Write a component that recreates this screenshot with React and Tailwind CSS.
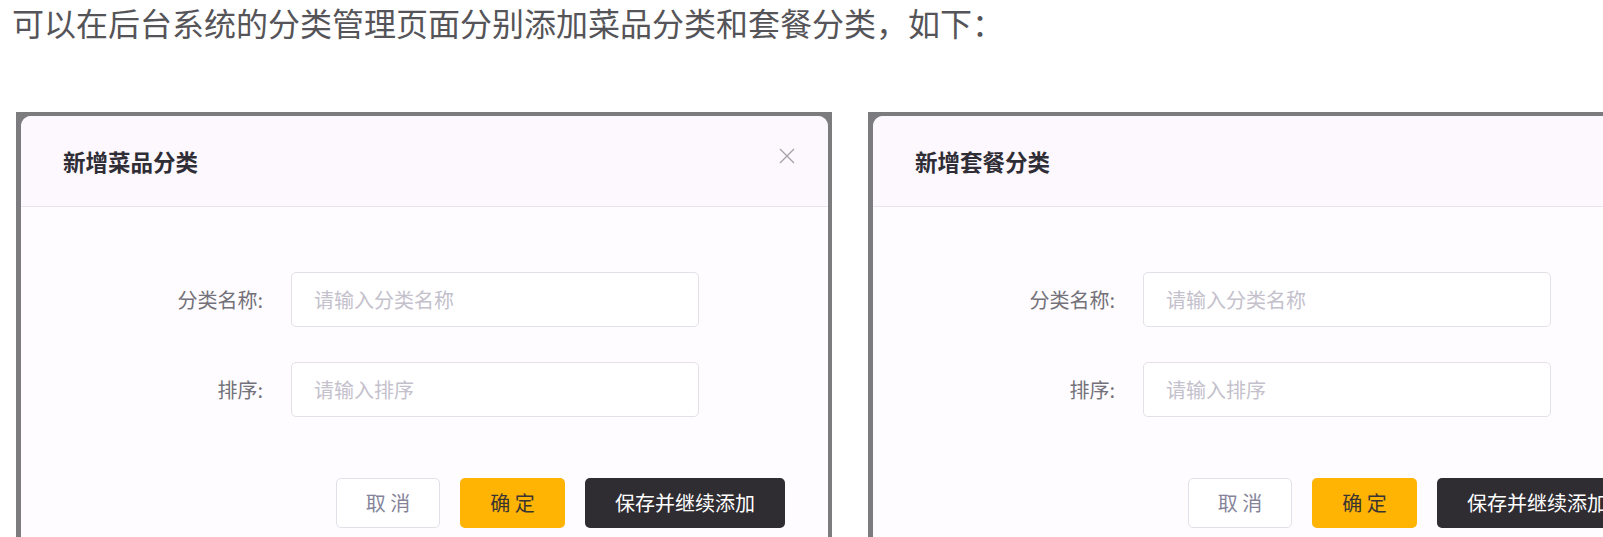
import React from 'react';

const font = { fontFamily: '"Noto Sans CJK SC", "Noto Sans", sans-serif' };

const CategoryDialog = ({ title }) => {
  return (
    <div className="shrink-0 w-[816px] bg-[#7c7b7d] pt-[4px] pl-[5px] pr-[4px]">
      <div className="w-[807px] h-[460px] rounded-t-[10px] bg-[#fefcfe] overflow-hidden">
        <div className="h-[91px] bg-[#fdf8fd] border-b border-[#e9e5eb] flex items-center justify-between pl-[42px] pr-[33px]">
          <span className="text-[22.5px] font-bold text-[#2f2d36] leading-none">{title}</span>
          <svg width="16" height="16" viewBox="0 0 16 16" className="-mt-[10px]">
            <path d="M1 1 L15 15 M15 1 L1 15" stroke="#a3a1a8" strokeWidth="1.3" fill="none" />
          </svg>
        </div>

        <div className="pt-[65px]">
          <div className="flex items-center">
            <label className="w-[270px] pr-[28px] text-right text-[20px] text-[#737179]">分类名称:</label>
            <input
              type="text"
              placeholder="请输入分类名称"
              className="w-[408px] h-[55px] rounded-[5px] border border-[#e3e1e7] bg-white px-[22px] text-[20px] placeholder:text-[#c4c1cc] outline-none"
              style={font}
            />
          </div>
          <div className="flex items-center mt-[35px]">
            <label className="w-[270px] pr-[28px] text-right text-[20px] text-[#737179]">排序:</label>
            <input
              type="text"
              placeholder="请输入排序"
              className="w-[408px] h-[55px] rounded-[5px] border border-[#e3e1e7] bg-white px-[22px] text-[20px] placeholder:text-[#c4c1cc] outline-none"
              style={font}
            />
          </div>

          <div className="flex justify-end gap-[20px] pr-[43px] mt-[61px]">
            <button className="w-[104px] h-[50px] rounded-[5px] border border-[#e3e1e8] bg-white text-[20px] text-[#85849a]" style={font}>
              取 消
            </button>
            <button className="w-[105px] h-[50px] rounded-[5px] bg-[#ffb302] text-[20px] text-[#3a3532]" style={font}>
              确 定
            </button>
            <button className="w-[200px] h-[50px] rounded-[5px] bg-[#2f2c32] text-[20px] text-white" style={font}>
              保存并继续添加
            </button>
          </div>
        </div>
      </div>
    </div>
  );
};

const App = () => {
  return (
    <div className="w-[1603px] h-[537px] overflow-hidden bg-white" style={font}>
      <p className="pl-[12px] text-[32px] leading-[44px] text-[#555458]">
        可以在后台系统的分类管理页面分别添加菜品分类和套餐分类，如下：
      </p>
      <div className="flex gap-[36px] pl-[16px] mt-[68px]">
        <CategoryDialog title="新增菜品分类" />
        <CategoryDialog title="新增套餐分类" />
      </div>
    </div>
  );
};

export default App;
